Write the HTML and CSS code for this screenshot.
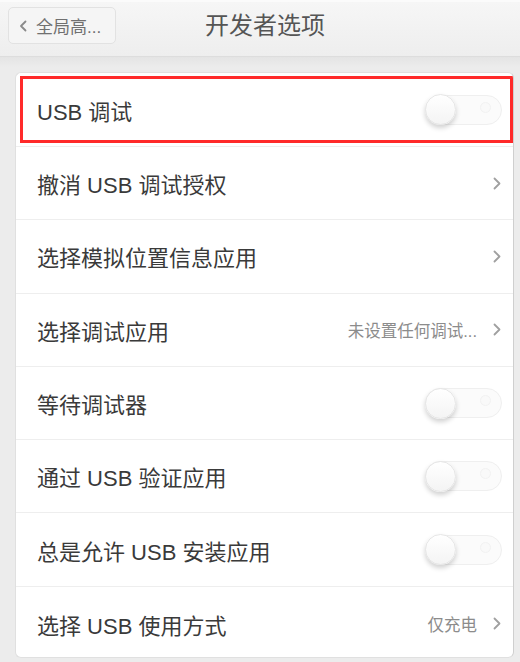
FILE: index.html
```html
<!DOCTYPE html>
<html lang="zh-CN">
<head>
<meta charset="utf-8">
<title>开发者选项</title>
<link rel="stylesheet" href="styles.css">
</head>
<body>
<div class="screen">
  <header class="topbar">
    <div class="back">
      <svg class="back-chev" width="8" height="12" viewBox="0 0 8 12"><path d="M6.5 1.5 L2 6 L6.5 10.5" fill="none" stroke="#8a8a8a" stroke-width="1.8" stroke-linecap="round" stroke-linejoin="round"/></svg>
      <span>全局高...</span>
    </div>
    <h1 class="title">开发者选项</h1>
    <div></div>
  </header>
  <main class="content">
    <div class="card">
      <div class="row first">
        <span class="label">USB 调试</span>
        <span class="switch"><span class="knob"></span><span class="dot"></span></span>
        <span class="highlight"></span>
      </div>
      <div class="row">
        <span class="label">撤消 USB 调试授权</span>
        <svg class="chev" width="8" height="13" viewBox="0 0 8 13"><path d="M1.5 1.5 L6.5 6.5 L1.5 11.5" fill="none" stroke="#a0a0a0" stroke-width="1.8" stroke-linecap="round" stroke-linejoin="round"/></svg>
      </div>
      <div class="row">
        <span class="label">选择模拟位置信息应用</span>
        <svg class="chev" width="8" height="13" viewBox="0 0 8 13"><path d="M1.5 1.5 L6.5 6.5 L1.5 11.5" fill="none" stroke="#a0a0a0" stroke-width="1.8" stroke-linecap="round" stroke-linejoin="round"/></svg>
      </div>
      <div class="row">
        <span class="label">选择调试应用</span>
        <span class="value">未设置任何调试...</span>
        <svg class="chev" width="8" height="13" viewBox="0 0 8 13"><path d="M1.5 1.5 L6.5 6.5 L1.5 11.5" fill="none" stroke="#a0a0a0" stroke-width="1.8" stroke-linecap="round" stroke-linejoin="round"/></svg>
      </div>
      <div class="row">
        <span class="label">等待调试器</span>
        <span class="switch"><span class="knob"></span><span class="dot"></span></span>
      </div>
      <div class="row">
        <span class="label">通过 USB 验证应用</span>
        <span class="switch"><span class="knob"></span><span class="dot"></span></span>
      </div>
      <div class="row">
        <span class="label">总是允许 USB 安装应用</span>
        <span class="switch"><span class="knob"></span><span class="dot"></span></span>
      </div>
      <div class="row last">
        <span class="label">选择 USB 使用方式</span>
        <span class="value">仅充电</span>
        <svg class="chev" width="8" height="13" viewBox="0 0 8 13"><path d="M1.5 1.5 L6.5 6.5 L1.5 11.5" fill="none" stroke="#a0a0a0" stroke-width="1.8" stroke-linecap="round" stroke-linejoin="round"/></svg>
      </div>
    </div>
  </main>
</div>
</body>
</html>
```

FILE: styles.css
```css
html, body {
  margin: 0;
  padding: 0;
}
body {
  width: 520px;
  height: 662px;
  overflow: hidden;
  background: #ececec;
  font-family: "Liberation Sans", "Noto Sans CJK SC", sans-serif;
}
.screen {
  width: 520px;
  height: 662px;
  display: flex;
  flex-direction: column;
}
.topbar {
  height: 57px;
  box-sizing: border-box;
  padding: 7px 0 0 10px;
  display: grid;
  grid-template-columns: 1fr auto 1fr;
  align-items: start;
  background: linear-gradient(#f6f6f6, #eeeeee);
  border-top: 2px solid #fbfbfb;
  border-bottom: 1px solid #dddddd;
  flex-shrink: 0;
}
.back {
  justify-self: start;
  margin-left: -2px;
  margin-top: -2px;
  width: 108px;
  height: 37px;
  box-sizing: border-box;
  border: 1px solid #e2e2e2;
  border-radius: 5px;
  background: #f5f5f5;
  display: flex;
  align-items: center;
  gap: 9px;
  padding-left: 10px;
  color: #707070;
  font-size: 17px;
}
.title {
  margin: -2px 0 0;
  font-weight: normal;
  font-size: 24px;
  line-height: 37px;
  color: #555;
}
.content {
  flex: 1;
  padding: 15px 6px 0 15px;
  background: linear-gradient(#e4e4e4 0, #ececec 10px, #ececec 100%);
  display: flex;
  flex-direction: column;
  min-height: 0;
}
.card {
  flex: 1;
  margin-bottom: 4px;
  background: #ffffff;
  border: 1px solid #e0e0e0;
  border-right-color: #cfcfcf;
  border-radius: 6px;
  display: flex;
  flex-direction: column;
  overflow: hidden;
}
.row {
  height: 73.3px;
  flex-shrink: 0;
  box-sizing: border-box;
  border-bottom: 1px solid #eeeeee;
  display: flex;
  align-items: center;
  padding: 0 12px 0 21px;
}
.row.first {
  height: 74px;
  position: relative;
}
.row.last {
  flex: 1;
  height: auto;
  border-bottom: none;
  padding-top: 4px;
}
.label {
  flex: 1;
  font-size: 22px;
  color: #3a3a3a;
}
.value {
  font-size: 16.5px;
  color: #8c8c8c;
  margin-right: 16px;
}
.chev {
  flex-shrink: 0;
}
.switch {
  width: 77px;
  height: 30px;
  box-sizing: border-box;
  border: 1px solid #efefef;
  border-radius: 15px;
  background: #fbfbfb;
  display: flex;
  align-items: center;
  margin-right: -1px;
}
.knob {
  width: 31px;
  height: 31px;
  margin-left: -1px;
  border-radius: 50%;
  box-sizing: border-box;
  border: 1px solid #e6e6e6;
  background: linear-gradient(#ffffff, #f4f4f4);
  box-shadow: 0 3px 5px rgba(0, 0, 0, 0.18);
}
.dot {
  width: 9px;
  height: 9px;
  margin-left: auto;
  margin-right: 10px;
  margin-top: -5px;
  border-radius: 50%;
  border: 1px solid #f2f2f2;
  background: #f9f9f9;
}
.highlight {
  position: absolute;
  left: 4px;
  top: 3px;
  right: 0;
  bottom: 3px;
  border: 3px solid #ff2a2a;
  pointer-events: none;
}
```
